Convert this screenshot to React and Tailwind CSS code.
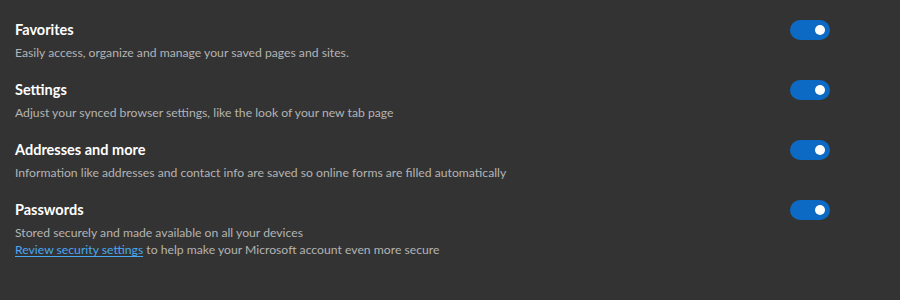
import React, { useState } from "react";

const items = [
    {
        title: "Favorites",
        desc: "Easily access, organize and manage your saved pages and sites.",
    },
    {
        title: "Settings",
        desc: "Adjust your synced browser settings, like the look of your new tab page",
    },
    {
        title: "Addresses and more",
        desc: "Information like addresses and contact info are saved so online forms are filled automatically",
    },
    {
        title: "Passwords",
        desc: "Stored securely and made available on all your devices",
        link: true,
    },
];

const Toggle = ({ on, onClick }) => (
    <button
        onClick={onClick}
        className={`w-[40px] h-[20px] rounded-full flex items-center px-[5px] shrink-0 ${
            on ? "bg-[#0c6ac4] justify-end" : "bg-transparent border border-[#cccccc] justify-start"
        }`}
    >
        <span className={`w-[10px] h-[10px] rounded-full ${on ? "bg-white" : "bg-[#cccccc]"}`}></span>
    </button>
);

export default function App() {
    const [state, setState] = useState([true, true, true, true]);

    return (
        <div
            className="w-[900px] h-[300px] bg-[#333333] pl-[15px] pt-[20px]"
            style={{ fontFamily: '"Segoe UI", Lato, sans-serif' }}
        >
            <div className="w-[815px] flex flex-col gap-[19px]">
                {items.map((item, i) => (
                    <div key={item.title} className="flex justify-between items-start">
                        <div>
                            <div className="text-[14.5px] leading-[20px] font-bold text-white">{item.title}</div>
                            <div className="mt-[4px] text-[12.2px] leading-[17px] text-[#b4b4b4]">{item.desc}</div>
                            {item.link && (
                                <div className="text-[12.2px] leading-[17px] text-[#b4b4b4]">
                                    <a href="#" className="text-[#4aa8f0] underline underline-offset-2">Review security settings</a>{" "}
                                    to help make your Microsoft account even more secure
                                </div>
                            )}
                        </div>
                        <Toggle
                            on={state[i]}
                            onClick={() => setState((s) => s.map((v, j) => (j === i ? !v : v)))}
                        />
                    </div>
                ))}
            </div>
        </div>
    );
}
